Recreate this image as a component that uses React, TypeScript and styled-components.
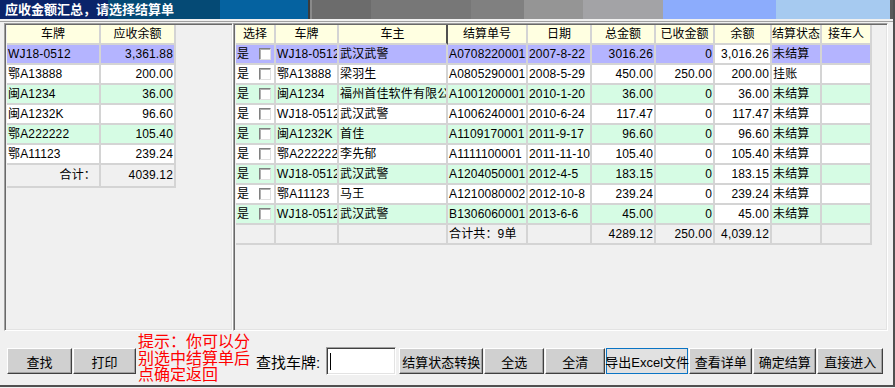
import React from 'react';
import styled, { createGlobalStyle } from 'styled-components';

const GlobalStyle = createGlobalStyle`
  html, body {
    margin: 0;
    padding: 0;
    background: #f0f0f0;
  }
  body {
    font-family: "Liberation Sans", "Noto Sans CJK SC", sans-serif;
    color: #000;
  }
`;

const Window = styled.div`
  width: 895px;
  height: 387px;
  box-sizing: border-box;
  background: #f0f0f0;
  border-right: 2px solid #505050;
  border-bottom: 2px solid #505050;
  display: flex;
  flex-direction: column;
`;

const TitleBar = styled.div`
  height: 19px;
  flex: none;
  padding-left: 5px;
  line-height: 19px;
  font-size: 13px;
  font-weight: bold;
  color: #fff;
  background: linear-gradient(to right,
    #0a246a 0 108px, #054a75 108px 220px, #0562a0 220px 308px,
    #3c3c3c 308px 310px, #8a8a8a 310px 312px, #6c6c6c 312px 371px,
    #777777 371px 471px, #808080 471px 524px, #959595 524px 583px,
    #a3a3a6 583px 663px, #8cacfc 663px 776px, #a6caf0 776px 890px,
    #5a5a5a 890px);
`;

const Body = styled.div`
  flex: none;
  display: flex;
  margin-top: 2px;
  border-top: 1px solid #a0a0a0;
  padding: 1px 5px 0 4px;
`;

const Panel = styled.div<{ $w?: number }>`
  box-sizing: border-box;
  height: 308px;
  width: ${p => (p.$w ? `${p.$w}px` : 'auto')};
  flex: ${p => (p.$w ? 'none' : '1')};
  border: 1px solid;
  border-color: #a0a0a0 #ffffff #ffffff #a0a0a0;
  box-shadow: inset 1px 1px #696969, inset -1px -1px #e3e3e3;
  padding: 1px 0 0 2px;
  overflow: hidden;
`;

const Grid = styled.div<{ $cols: string }>`
  display: grid;
  grid-template-columns: ${p => p.$cols};
  width: max-content;
`;

const Cell = styled.div<{ $bg?: string; $right?: boolean; $h?: number }>`
  box-sizing: border-box;
  height: ${p => p.$h ?? 20}px;
  line-height: ${p => (p.$h ?? 20) - 2}px;
  background: ${p => p.$bg ?? '#ffffff'};
  border-right: 2px solid #d4d4d4;
  border-bottom: 2px solid #d4d4d4;
  padding: 0 1px;
  font-size: 12px;
  letter-spacing: 0.15px;
  text-align: ${p => (p.$right ? 'right' : 'left')};
  white-space: nowrap;
  overflow: hidden;
`;

const HeadCell = styled.div<{ $dark?: boolean }>`
  box-sizing: border-box;
  height: 20px;
  line-height: 18px;
  background: #ffffe1;
  border-right: 2px solid ${p => (p.$dark ? '#505050' : '#d4d4d4')};
  border-bottom: 2px solid #d4d4d4;
  font-size: 12px;
  text-align: center;
  white-space: nowrap;
  overflow: hidden;
`;

const ChoiceCell = styled(Cell)`
  display: flex;
  align-items: center;
  justify-content: space-between;
  padding-right: 3px;
`;

const Check = styled.span`
  box-sizing: border-box;
  width: 12px;
  height: 12px;
  background: #fff;
  border: 1px solid;
  border-color: #808080 #e0e0e0 #e0e0e0 #808080;
  box-shadow: inset 1px 1px #b0b0b0;
`;

const Toolbar = styled.div`
  flex: 1;
  display: flex;
  align-items: center;
  box-sizing: border-box;
  padding: 6px 0 0 7px;
`;

const Button = styled.div<{ $w: number; $focus?: boolean; $gap?: number }>`
  box-sizing: border-box;
  width: ${p => p.$w}px;
  height: 26px;
  margin-left: ${p => p.$gap ?? 1}px;
  display: flex;
  align-items: center;
  justify-content: center;
  font-size: 13px;
  white-space: nowrap;
  background: ${p => (p.$focus ? '#e1e1e1' : '#d0d0d0')};
  border: 1px solid;
  border-color: ${p => (p.$focus ? '#0a74c4' : '#ffffff #404040 #404040 #ffffff')};
  box-shadow: ${p => (p.$focus ? 'none' : 'inset -1px -1px #a0a0a0')};
`;

const Hint = styled.div`
  align-self: flex-start;
  margin: -3px 0 0 2px;
  width: 113px;
  color: #ff0000;
  font-size: 16px;
  line-height: 16.5px;
  white-space: nowrap;
`;

const Label = styled.div`
  margin-left: 5px;
  font-size: 15px;
  white-space: nowrap;
`;

const SearchBox = styled.div`
  box-sizing: border-box;
  width: 70px;
  height: 28px;
  margin-left: 6px;
  background: #fff;
  border: 1px solid;
  border-color: #a0a0a0 #ffffff #ffffff #a0a0a0;
  box-shadow: inset 1px 1px #404040, inset -1px -1px #e3e3e3;
  display: flex;
  align-items: center;
  padding-left: 3px;
`;

const Caret = styled.span`
  width: 1px;
  height: 17px;
  background: #000;
`;

const tone: Record<string, string> = {
  sel: '#b4b4ff',
  white: '#ffffff',
  green: '#d6fce4',
  total: '#f0f0f0',
};

const leftRows = [
  ['WJ18-0512', '3,361.88', 'sel'],
  ['鄂A13888', '200.00', 'white'],
  ['闽A1234', '36.00', 'green'],
  ['闽A1232K', '96.60', 'white'],
  ['鄂A222222', '105.40', 'green'],
  ['鄂A11123', '239.24', 'white'],
];

type Bill = {
  plate: string;
  owner: string;
  no: string;
  date: string;
  total: string;
  paid: string;
  rest: string;
  state: string;
  t: string;
};

const bills: Bill[] = [
  { plate: 'WJ18-0512', owner: '武汉武警', no: 'A0708220001', date: '2007-8-22', total: '3016.26', paid: '0', rest: '3,016.26', state: '未结算', t: 'sel' },
  { plate: '鄂A13888', owner: '梁羽生', no: 'A0805290001', date: '2008-5-29', total: '450.00', paid: '250.00', rest: '200.00', state: '挂账', t: 'white' },
  { plate: '闽A1234', owner: '福州首佳软件有限公司', no: 'A1001200001', date: '2010-1-20', total: '36.00', paid: '0', rest: '36.00', state: '未结算', t: 'green' },
  { plate: 'WJ18-0512', owner: '武汉武警', no: 'A1006240001', date: '2010-6-24', total: '117.47', paid: '0', rest: '117.47', state: '未结算', t: 'white' },
  { plate: '闽A1232K', owner: '首佳', no: 'A1109170001', date: '2011-9-17', total: '96.60', paid: '0', rest: '96.60', state: '未结算', t: 'green' },
  { plate: '鄂A222222', owner: '李先郁', no: 'A1111100001', date: '2011-11-10', total: '105.40', paid: '0', rest: '105.40', state: '未结算', t: 'white' },
  { plate: 'WJ18-0512', owner: '武汉武警', no: 'A1204050001', date: '2012-4-5', total: '183.15', paid: '0', rest: '183.15', state: '未结算', t: 'green' },
  { plate: '鄂A11123', owner: '马王', no: 'A1210080002', date: '2012-10-8', total: '239.24', paid: '0', rest: '239.24', state: '未结算', t: 'white' },
  { plate: 'WJ18-0512', owner: '武汉武警', no: 'B1306060001', date: '2013-6-6', total: '45.00', paid: '0', rest: '45.00', state: '未结算', t: 'green' },
];

const heads = ['选择', '车牌', '车主', '结算单号', '日期', '总金额', '已收金额', '余额', '结算状态', '接车人'];

function App() {
  return (
    <Window>
      <GlobalStyle />
      <TitleBar>应收金额汇总，请选择结算单</TitleBar>
      <Body>
        <Panel $w={229}>
          <Grid $cols="94px 75px">
            <HeadCell>车牌</HeadCell>
            <HeadCell>应收余额</HeadCell>
            {leftRows.map(([plate, sum, t], i) => (
              <React.Fragment key={i}>
                <Cell $bg={tone[t]}>{plate}</Cell>
                <Cell $bg={tone[t]} $right>{sum}</Cell>
              </React.Fragment>
            ))}
            <Cell $bg={tone.total} $right $h={23} style={{ paddingRight: 3 }}>合计：</Cell>
            <Cell $bg={tone.total} $right $h={23}>4039.12</Cell>
          </Grid>
        </Panel>

        <Panel>
          <Grid $cols="40px 63px 109px 80px 64px 64px 59px 57px 50px 50px">
            {heads.map(h => (
              <HeadCell key={h} $dark={h === '车主'}>{h}</HeadCell>
            ))}
            {bills.map((b, i) => {
              const bg = tone[b.t];
              return (
                <React.Fragment key={i}>
                  <ChoiceCell $bg={bg}>
                    <span>是</span>
                    <Check />
                  </ChoiceCell>
                  <Cell $bg={bg}>{b.plate}</Cell>
                  <Cell $bg={bg}>{b.owner}</Cell>
                  <Cell $bg={bg}>{b.no}</Cell>
                  <Cell $bg={bg}>{b.date}</Cell>
                  <Cell $bg={bg} $right>{b.total}</Cell>
                  <Cell $bg={bg} $right>{b.paid}</Cell>
                  <Cell $right>{b.rest}</Cell>
                  <Cell $bg={bg}>{b.state}</Cell>
                  <Cell $bg={bg} />
                </React.Fragment>
              );
            })}
            <Cell $bg={tone.total} />
            <Cell $bg={tone.total} />
            <Cell $bg={tone.total} />
            <Cell $bg={tone.total}>合计共：9单</Cell>
            <Cell $bg={tone.total} />
            <Cell $bg={tone.total} $right>4289.12</Cell>
            <Cell $bg={tone.total} $right>250.00</Cell>
            <Cell $bg={tone.total} $right>4,039.12</Cell>
            <Cell $bg={tone.total} />
            <Cell $bg={tone.total} />
          </Grid>
        </Panel>
      </Body>

      <Toolbar>
        <Button $w={65} $gap={0}>查找</Button>
        <Button $w={63}>打印</Button>
        <Hint>
          提示：你可以分<br />
          别选中结算单后<br />
          点确定返回
        </Hint>
        <Label>查找车牌:</Label>
        <SearchBox>
          <Caret />
        </SearchBox>
        <Button $w={84} $gap={3}>结算状态转换</Button>
        <Button $w={60}>全选</Button>
        <Button $w={60}>全清</Button>
        <Button $w={82} $focus>导出Excel文件</Button>
        <Button $w={63}>查看详单</Button>
        <Button $w={63}>确定结算</Button>
        <Button $w={66}>直接进入</Button>
      </Toolbar>
    </Window>
  );
}

export default App;
